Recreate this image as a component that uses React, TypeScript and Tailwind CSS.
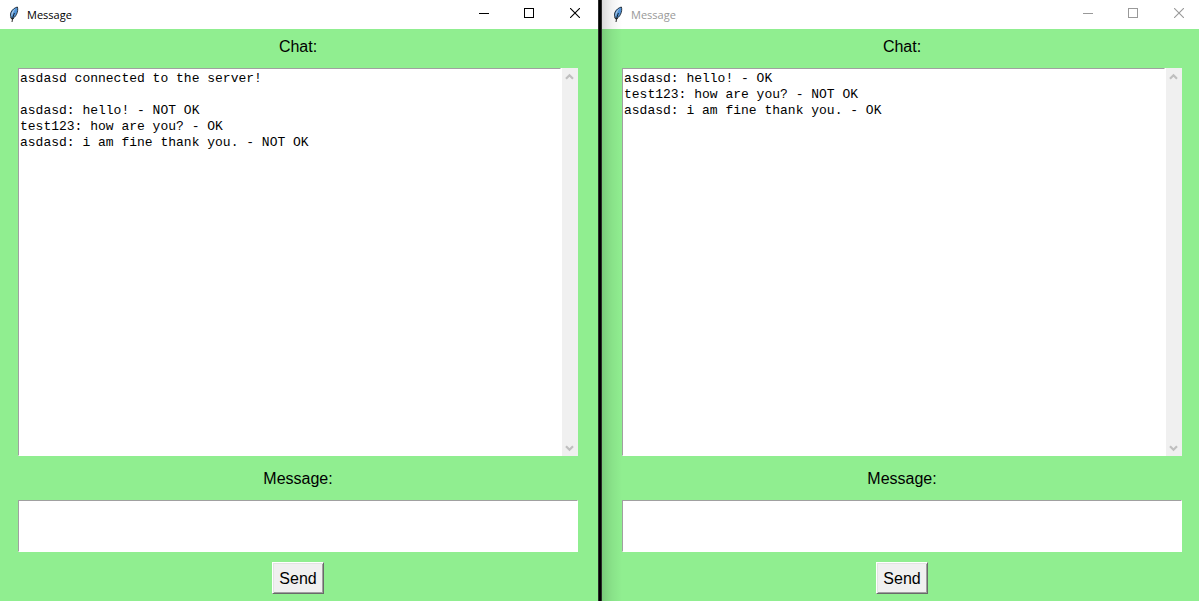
import { useId } from "react";

type ChatWindowProps = {
  active: boolean;
  lines: string[];
  className: string;
};

function FeatherIcon() {
  return (
    <svg width="10" height="17" viewBox="0 0 10 17" aria-hidden="true">
      <path
        d="M8.4 1 C9 3 8.8 6 7.4 8.6 C6.4 10.4 5 12 3.4 12.8 C1.4 11.4 1 8.6 2 6.2 C3.2 3.6 5.8 1.6 8.4 1 Z"
        fill="#4f93d8"
        stroke="#1c2630"
        strokeWidth="0.9"
      />
      <path d="M6.6 2.6 C4.6 3.8 3.2 5.6 2.6 7.4 C2.4 8.6 2.4 9.6 2.8 10.4 C3.6 7.6 4.8 5 6.6 2.6 Z" fill="#b9cfe4" />
      <path d="M5.4 7 C4.4 9.4 3.6 12 3 16" fill="none" stroke="#111111" strokeWidth="0.9" />
      <path d="M1.6 11.4 L3 13.4 L4.8 12.4" fill="none" stroke="#222222" strokeWidth="1" />
    </svg>
  );
}

function TitleBar({ active }: { active: boolean }) {
  return (
    <header className={`flex h-[29px] items-center ${active ? "pl-[9px] text-black" : "-mr-[3px] pl-[11px] text-[#999999]"}`}>
      <FeatherIcon />
      <h1 className="ml-2 flex-1 font-['Open_Sans','Noto_Sans',sans-serif] text-[11px] leading-4">Message</h1>
      <div className="flex self-stretch">
        <button type="button" aria-label="Minimize" className="flex w-11 justify-center pt-2">
          <svg width="10" height="10" viewBox="0 0 10 10" shapeRendering="crispEdges">
            <rect x="0" y="5" width="10" height="1" fill="currentColor" />
          </svg>
        </button>
        <button type="button" aria-label="Maximize" className="flex w-[46px] justify-center pt-2">
          <svg width="10" height="10" viewBox="0 0 10 10" shapeRendering="crispEdges">
            <rect x="0.5" y="0.5" width="9" height="9" fill="none" stroke="currentColor" />
          </svg>
        </button>
        <button type="button" aria-label="Close" className="flex w-[46px] justify-center pt-2">
          <svg width="10" height="10" viewBox="0 0 10 10">
            <path d="M0 0 L10 10 M10 0 L0 10" fill="none" stroke="currentColor" strokeWidth="1.1" />
          </svg>
        </button>
      </div>
    </header>
  );
}

function ScrollBar() {
  return (
    <div className="flex w-4 flex-col items-start justify-between bg-[#f0f0f0] pt-[5px] pb-1 pl-[3px] text-[#bfbfbf]">
      <button type="button" aria-label="Scroll up">
        <svg className="block" width="9" height="7" viewBox="0 0 9 7">
          <path d="M1 5.8 L4.5 2.3 L8 5.8" fill="none" stroke="currentColor" strokeWidth="2.2" />
        </svg>
      </button>
      <button type="button" aria-label="Scroll down">
        <svg className="block" width="9" height="7" viewBox="0 0 9 7">
          <path d="M1 1.2 L4.5 4.7 L8 1.2" fill="none" stroke="currentColor" strokeWidth="2.2" />
        </svg>
      </button>
    </div>
  );
}

function ChatWindow({ active, lines, className }: ChatWindowProps) {
  const id = useId();
  return (
    <section className="flex min-w-0 flex-col bg-white">
      <TitleBar active={active} />
      <div className={`flex flex-1 flex-col bg-[#90ee90] pb-[7px] ${className}`}>
        <h2 id={`${id}-chat`} className="flex h-[39px] items-center justify-center pb-1 text-[16px] leading-5">
          Chat:
        </h2>
        <div className="flex flex-1 bg-white">
          <div
            role="log"
            aria-labelledby={`${id}-chat`}
            className="mr-px flex-1 border border-t-[#a0a0a0] border-r-white border-b-white border-l-[#a0a0a0] pt-0.5 pl-px font-['Liberation_Mono','Courier_New',monospace] text-[13px] leading-4 whitespace-pre-wrap"
          >
            {lines.map((line, index) => (
              <p key={index} className="min-h-4">
                {line}
              </p>
            ))}
          </div>
          <ScrollBar />
        </div>
        <label htmlFor={`${id}-message`} className="flex h-11 items-center justify-center pt-0.5 text-[16px] leading-5">
          Message:
        </label>
        <textarea
          id={`${id}-message`}
          className="block h-[52px] w-full resize-none border border-t-[#a0a0a0] border-r-white border-b-white border-l-[#a0a0a0] bg-white p-px text-[16px] outline-none"
        />
        <button
          type="button"
          className="mt-[10px] flex h-8 w-[52px] items-center justify-center self-center border border-t-white border-r-[#696969] border-b-[#696969] border-l-white bg-[#f0f0f0] pt-0.5 text-[16px] leading-5 shadow-[inset_1px_1px_0_#e3e3e3,inset_-1px_-1px_0_#a0a0a0]"
        >
          Send
        </button>
      </div>
    </section>
  );
}

const firstChat = [
  "asdasd connected to the server!",
  "",
  "asdasd: hello! - NOT OK",
  "test123: how are you? - OK",
  "asdasd: i am fine thank you. - NOT OK",
];

const secondChat = [
  "asdasd: hello! - OK",
  "test123: how are you? - NOT OK",
  "asdasd: i am fine thank you. - OK",
];

export default function App() {
  return (
    <main className="grid min-h-screen grid-cols-[598fr_4px_597fr] overflow-x-hidden font-['Liberation_Sans',Arial,sans-serif] text-black">
      <ChatWindow active lines={firstChat} className="pr-5 pl-[18px]" />
      <div className="border-x border-[#2b2b2b] bg-black" />
      <div className="relative grid min-w-0">
        <ChatWindow active={false} lines={secondChat} className="pr-[17px] pl-5" />
        <div className="pointer-events-none absolute inset-y-0 left-0 w-5 bg-linear-to-r from-black/15 via-black/5 to-transparent" />
      </div>
    </main>
  );
}
